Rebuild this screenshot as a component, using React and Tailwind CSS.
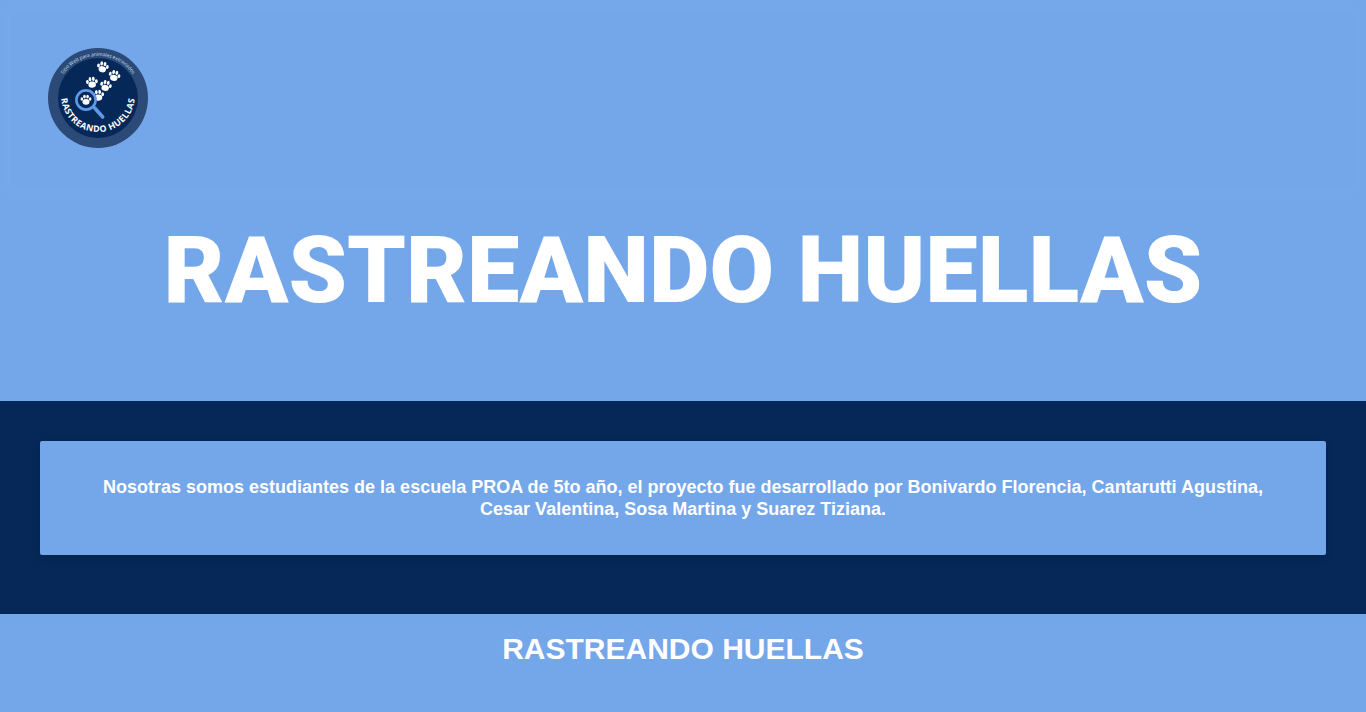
import React from "react";

const Paw = ({ x, y, s = 1, fill = "#ffffff", rotate = 0 }) => (
  <g transform={`translate(${x} ${y}) rotate(${rotate}) scale(${s})`} fill={fill}>
    <ellipse cx="0" cy="1.4" rx="2.7" ry="2.2" />
    <ellipse cx="-3.2" cy="-0.8" rx="1" ry="1.4" />
    <ellipse cx="-1.2" cy="-2.6" rx="1" ry="1.5" />
    <ellipse cx="1.2" cy="-2.6" rx="1" ry="1.5" />
    <ellipse cx="3.2" cy="-0.8" rx="1" ry="1.4" />
  </g>
);

const Logo = () => (
  <svg width="100" height="100" viewBox="0 0 100 100" className="block">
    <defs>
      <path id="arcTop" d="M 12 32 A 42 42 0 0 1 88 32" />
      <path id="arcBottom" d="M 13 47 A 37 37 0 0 0 87 47" />
    </defs>
    <circle cx="50" cy="50" r="50" fill="#2c4a78" />
    <circle cx="50" cy="50" r="40" fill="#052859" />
    <text fontSize="4.8" fill="#d5e0ee" fontFamily="'Open Sans', sans-serif">
      <textPath href="#arcTop" startOffset="50%" textAnchor="middle">
        Sitio Web para animales extraviados
      </textPath>
    </text>
    <text fontSize="8.8" fontWeight="700" letterSpacing="0.45" fill="#ffffff" fontFamily="'Open Sans', sans-serif">
      <textPath href="#arcBottom" startOffset="50%" textAnchor="middle">
        RASTREANDO HUELLAS
      </textPath>
    </text>
    <Paw x={54.7} y={19.3} s={1.4} rotate={10} />
    <Paw x={66.3} y={28} s={1.4} rotate={15} />
    <Paw x={44} y={34.7} s={1.4} rotate={-5} />
    <Paw x={57.7} y={38} s={1.4} rotate={15} />
    <Paw x={50.3} y={47.7} s={1.4} rotate={-5} />
    <line x1="46.7" y1="60" x2="54.7" y2="69" stroke="#5f99e6" strokeWidth="3.6" strokeLinecap="round" />
    <circle cx="38" cy="52" r="9.6" fill="#052859" stroke="#5f99e6" strokeWidth="2.6" />
    <Paw x={38} y={52} s={1.3} />
  </svg>
);

const App = () => {
  return (
    <div className="min-h-[712px] bg-[#74a6ea] font-['Liberation_Sans',Arial,sans-serif] text-white">
      <div className="h-[401px] p-[10px]">
        <header className="h-[180px] pl-[38px] pt-[38px] shadow-[0_0_10px_rgba(255,255,255,0.06)]">
          <Logo />
        </header>
        <div className="flex justify-center pt-[25px]">
          <h1 className="font-['Roboto',sans-serif] text-[93.6px] leading-[110px] font-black whitespace-nowrap">
            RASTREANDO HUELLAS
          </h1>
        </div>
      </div>

      <section className="h-[213px] bg-[#062858] px-10 pt-10">
        <div className="flex h-[114px] items-center justify-center rounded-[2px] bg-[#74a6ea] px-[50px] shadow-[0_4px_8px_rgba(0,0,0,0.1)]">
          <p className="text-center text-[18px] leading-[22px] font-bold">
            Nosotras somos estudiantes de la escuela PROA de 5to año, el proyecto fue desarrollado por Bonivardo Florencia, Cantarutti Agustina, Cesar Valentina, Sosa Martina y Suarez Tiziana.
          </p>
        </div>
      </section>

      <footer className="flex h-[98px] justify-center pt-[18px]">
        <h2 className="text-[30px] leading-[33px] font-bold">RASTREANDO HUELLAS</h2>
      </footer>
    </div>
  );
};

export default App;
